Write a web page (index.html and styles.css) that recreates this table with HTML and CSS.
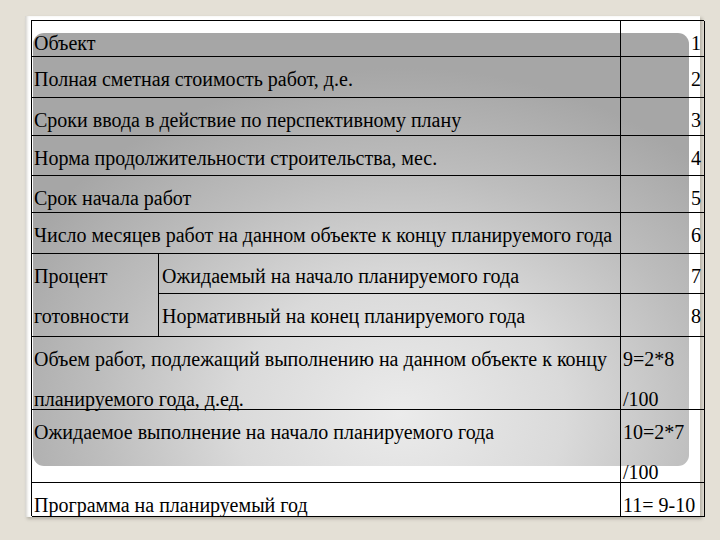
FILE: index.html
```html
<!DOCTYPE html>
<html lang="ru">
<head>
<meta charset="utf-8">
<title>Таблица</title>
<link rel="stylesheet" href="styles.css">
</head>
<body>
<div class="slide">
  <div class="panel"></div>
  <div class="table">
    <div class="c wide">Объект</div><div class="c num">1</div>
    <div class="c wide">Полная сметная стоимость работ, д.е.</div><div class="c num">2</div>
    <div class="c wide">Сроки ввода в действие по перспективному плану</div><div class="c num">3</div>
    <div class="c wide">Норма продолжительности строительства, мес.</div><div class="c num">4</div>
    <div class="c wide">Срок начала работ</div><div class="c num">5</div>
    <div class="c wide">Число месяцев работ на данном объекте к концу планируемого года</div><div class="c num">6</div>
    <div class="c tall">Процент<br>готовности</div><div class="c sub">Ожидаемый на начало планируемого года</div><div class="c num">7</div>
    <div class="c sub">Нормативный на конец планируемого года</div><div class="c num">8</div>
    <div class="c wide">Объем работ, подлежащий выполнению на данном объекте к концу<br>планируемого года, д.ед.</div><div class="c frm">9=2*8<br>/100</div>
    <div class="c wide">Ожидаемое выполнение на начало планируемого года</div><div class="c frm">10=2*7<br>/100</div>
    <div class="c wide">Программа на планируемый год</div><div class="c frm">11= 9-10</div>
  </div>
</div>
</body>
</html>
```
FILE: styles.css
```css
html, body {
  margin: 0;
  padding: 0;
}
body {
  width: 720px;
  height: 540px;
  background: #e4e0d6;
  padding: 16px 0 0 25px;
  box-sizing: border-box;
  overflow: hidden;
}
.slide {
  width: 675px;
  height: 501px;
  background: #ffffff;
  display: grid;
  grid-template-columns: 675px;
  grid-template-rows: 501px;
  box-shadow: inset 3px 0 3px -1px #d4d2cc, 2px 2px 3px rgba(120,115,105,0.45);
}
.panel {
  grid-area: 1 / 1;
  margin: 17px 0 0 8px;
  width: 656px;
  height: 433px;
  border-radius: 11px;
  background: radial-gradient(ellipse 66% 80% at 56% 88%, #ebebeb 0%, #dadada 38%, #bdbdbd 70%, #a6a6a6 100%);
}
.table {
  grid-area: 1 / 1;
  margin: 4px 0 0 6px;
  width: 673px;
  height: 496px;
  box-sizing: border-box;
  display: grid;
  grid-template-columns: 127px 462px 84px;
  grid-template-rows: 36px 41px 38px 40px 37px 41px 40px 43px 73px 73px 34px;
  border-top: 1px solid #000;
  border-left: 1px solid #000;
  font-family: "Liberation Serif", "Liberation Sans", sans-serif;
  font-size: 20px;
  color: #000;
}
.c {
  box-sizing: border-box;
  border-right: 1px solid #000;
  border-bottom: 1px solid #000;
  line-height: 40px;
  padding: 2px 0 0 2px;
  white-space: nowrap;
  overflow: visible;
}
.wide {
  grid-column: 1 / 3;
}
.tall {
  grid-row: span 2;
}
.sub {
  padding-left: 3px;
}
.num {
  text-align: right;
  padding-right: 3px;
}
.frm {
  padding-left: 2px;
}
```
